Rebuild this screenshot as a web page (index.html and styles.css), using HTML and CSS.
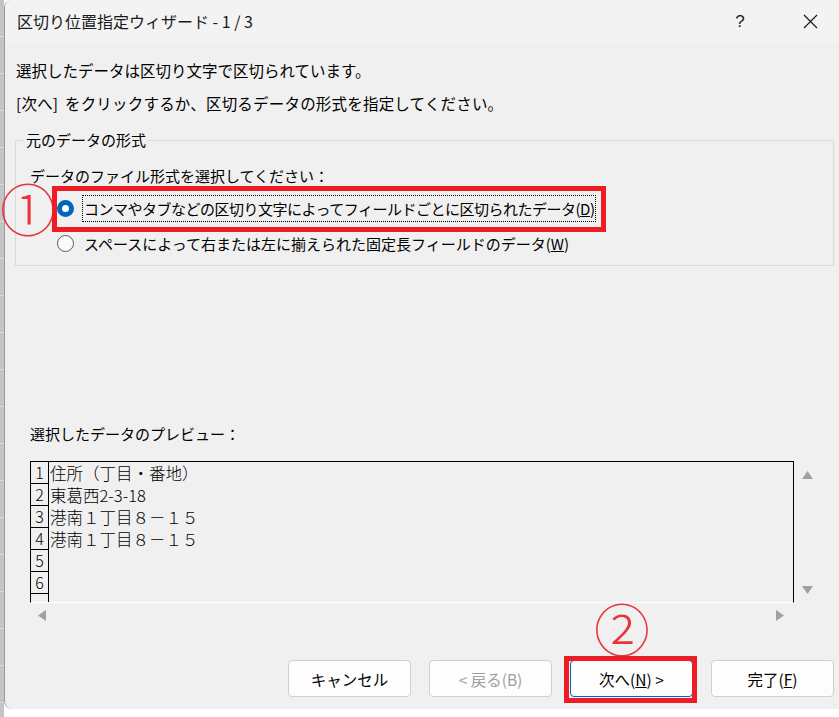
FILE: index.html
```html
<!DOCTYPE html>
<html lang="ja">
<head>
<meta charset="utf-8">
<title>区切り位置指定ウィザード</title>
<link rel="stylesheet" href="styles.css">
</head>
<body>
<div class="screen">
  <div class="behind"></div>
  <div class="window">
    <div class="titlebar">
      <span class="title">区切り位置指定ウィザード - 1 / 3</span>
      <span class="help">?</span>
      <span class="close"><svg width="15" height="15" viewBox="0 0 15 15"><path d="M1 1L14 14M14 1L1 14" stroke="#1a1a1a" stroke-width="1.2" fill="none"/></svg></span>
    </div>
    <div class="body">
      <p class="msg">選択したデータは区切り文字で区切られています。</p>
      <p class="msg msg2">[次へ] をクリックするか、区切るデータの形式を指定してください。</p>
      <fieldset class="group">
        <legend>元のデータの形式</legend>
        <div class="prompt">データのファイル形式を選択してください：</div>
        <div class="radio-row row1"><span class="radio checked"></span><span class="label focus">コンマやタブなどの区切り文字によってフィールドごとに区切られたデータ(<u>D</u>)</span></div>
        <div class="radio-row row2"><span class="radio"></span><span class="label">スペースによって右または左に揃えられた固定長フィールドのデータ(<u>W</u>)</span></div>
      </fieldset>
      <div class="preview-label">選択したデータのプレビュー：</div>
      <div class="preview">
        <div class="preview-main">
          <div class="grid">
            <div class="prow"><span class="num">1</span><span class="cell">住所（丁目・番地）</span></div>
            <div class="prow"><span class="num">2</span><span class="cell">東葛西2-3-18</span></div>
            <div class="prow"><span class="num">3</span><span class="cell">港南１丁目８－１５</span></div>
            <div class="prow"><span class="num">4</span><span class="cell">港南１丁目８－１５</span></div>
            <div class="prow"><span class="num">5</span><span class="cell"></span></div>
            <div class="prow"><span class="num">6</span><span class="cell"></span></div>
            <div class="prow"><span class="num"></span><span class="cell"></span></div>
          </div>
          <div class="vscroll">
            <svg width="11" height="8" viewBox="0 0 11 8"><polygon points="5.5,0 11,8 0,8" fill="#a0a0a0"/></svg>
            <svg width="11" height="8" viewBox="0 0 11 8"><polygon points="0,0 11,0 5.5,8" fill="#a0a0a0"/></svg>
          </div>
        </div>
        <div class="hscroll">
          <svg width="8" height="11" viewBox="0 0 8 11"><polygon points="0,5.5 8,0 8,11" fill="#a0a0a0"/></svg>
          <svg width="8" height="11" viewBox="0 0 8 11"><polygon points="0,0 8,5.5 0,11" fill="#a0a0a0"/></svg>
        </div>
      </div>
      <div class="buttons">
        <button class="btn">キャンセル</button>
        <button class="btn disabled">&lt; 戻る(B)</button>
        <button class="btn default">次へ(<u>N</u>) &gt;</button>
        <button class="btn">完了(<u>F</u>)</button>
      </div>
    </div>
  </div>
  <div class="mark mark1">①</div>
  <div class="redbox box1"></div>
  <div class="mark mark2">②</div>
  <div class="redbox box2"></div>
</div>
</body>
</html>
```
FILE: styles.css
```css
* { box-sizing: border-box; }
html, body { margin: 0; padding: 0; background: #ffffff; }
body {
  font-family: "Noto Sans CJK JP", "Noto Sans", sans-serif;
  color: #000;
}
.screen {
  position: relative;
  width: 839px;
  height: 717px;
  display: flex;
  align-items: flex-start;
  overflow: hidden;
  background: #ffffff;
}
.behind {
  width: 4px;
  height: 717px;
  background: repeating-linear-gradient(to bottom, #c4c4c4 0, #c4c4c4 36px, #dcdcdc 36px, #dcdcdc 37px);
}
.window {
  width: 835px;
  height: 709px;
  background: #f0f0f0;
  border-left: 1px solid #9a9a9a;
  border-radius: 8px 0 0 8px;
  overflow: hidden;
}
.titlebar {
  height: 43px;
  background: #f3f3f3;
  display: flex;
  align-items: center;
  padding-left: 12px;
}
.title {
  flex: 1;
  font-size: 16px;
  color: #1a1a1a;
  line-height: 43px;
}
.help {
  width: 60px;
  margin-right: 11px;
  text-align: center;
  font-family: "Liberation Sans", "Noto Sans", sans-serif;
  font-size: 17px;
  color: #1a1a1a;
}
.close {
  width: 58px;
  height: 43px;
  display: flex;
  align-items: center;
  justify-content: center;
}
.body {
  padding: 16px 5px 0 10px;
  font-size: 15px;
  line-height: 22px;
}
.msg { margin: 0 0 0 1px; font-size: 15.5px; }
.msg2 { margin-top: 11px; word-spacing: 3px; letter-spacing: 0.2px; }
.group {
  margin: 15px 0 0 0;
  padding: 14px 0 9px 14px;
  border: 1px solid #dadada;
  min-width: 0;
}
.group legend {
  margin-left: -6px;
  padding: 0 2px;
  line-height: 22px;
}
.prompt { line-height: 22px; }
.radio-row {
  display: flex;
  align-items: center;
  height: 26px;
  padding-left: 27px;
}
.row1 { margin-top: 8px; }
.row2 { margin-top: 9px; }
.radio {
  width: 17px;
  height: 17px;
  border-radius: 50%;
  border: 1px solid #5a5a5a;
  background: #fbfbfb;
  margin-right: 8px;
  flex: none;
}
.radio.checked {
  border: 5px solid #0067c0;
  background: #ffffff;
}
.label {
  padding: 0 1px;
  line-height: 25px;
  border: 1px solid transparent;
  white-space: nowrap;
}
.label.focus { border: 1px dotted #000; letter-spacing: -0.5px; }
.preview-label {
  margin: 157px 0 0 15px;
}
.preview { margin: 16px 0 0 15px; }
.preview-main { display: flex; }
.grid {
  width: 764px;
  height: 142px;
  border: 1px solid #000;
  border-bottom: 1px solid #ffffff;
  overflow: hidden;
  font-size: 16.5px;
}
.prow {
  display: flex;
  height: 22px;
}
.num {
  width: 18px;
  flex: none;
  border-right: 1px solid #000;
  border-bottom: 1px solid #000;
  text-align: center;
  line-height: 21px;
  font-size: 16px;
  font-weight: 300;
}
.cell {
  padding-left: 1px;
  line-height: 22px;
  font-weight: 300;
  white-space: nowrap;
}
.vscroll {
  width: 26px;
  height: 142px;
  display: flex;
  flex-direction: column;
  justify-content: space-between;
  align-items: center;
  padding: 10px 0 9px 0;
}
.hscroll {
  width: 764px;
  height: 25px;
  display: flex;
  justify-content: space-between;
  align-items: center;
  padding: 0 10px 0 8px;
}
.buttons {
  margin-top: 32px;
  display: flex;
  justify-content: flex-end;
  gap: 18px;
}
.btn {
  width: 123px;
  height: 37px;
  background: #fdfdfd;
  border: 1px solid #d0d0d0;
  border-radius: 4px;
  font-family: "Noto Sans CJK JP", "Noto Sans", sans-serif;
  font-size: 15.5px;
  color: #000;
  padding: 0;
}
.btn.disabled { color: #a0a0a0; }
.btn.default { border-color: #0067c0; }
.mark {
  position: absolute;
  color: #e8343c;
  font-family: "Noto Sans CJK JP", sans-serif;
  font-size: 56px;
  line-height: 40px;
  height: 40px;
  font-weight: 300;
}
.mark1 { left: 0px; top: 187px; }
.mark2 { left: 594px; top: 607px; }
.redbox {
  position: absolute;
  border: 5px solid #ee1c25;
}
.box1 { left: 52px; top: 186px; width: 554px; height: 46px; }
.box2 { left: 564px; top: 656px; width: 133px; height: 47px; }
```
